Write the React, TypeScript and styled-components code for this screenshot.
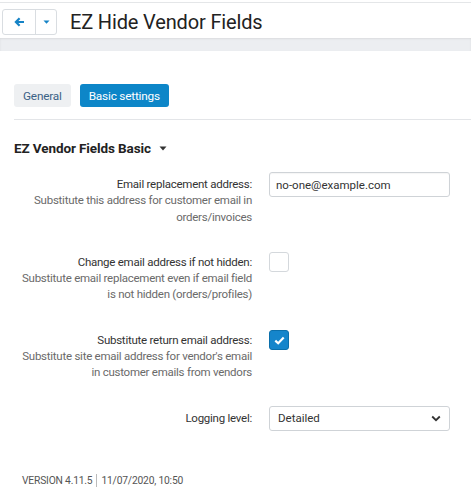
import React from 'react';
import styled, {createGlobalStyle} from 'styled-components';

const GlobalStyle = createGlobalStyle`
    html, body {
        margin: 0;
        padding: 0;
        background: #fff;
    }
    body {
        font-family: Roboto, "Liberation Sans", Arial, sans-serif;
        color: #333;
    }
`;

const Page = styled.div`
    width: 471px;
    min-height: 500px;
    border-top: 1px solid #e4e6e8;
    margin-top: 2px;
`;

const Header = styled.header`
    display: flex;
    align-items: center;
    gap: 13px;
    height: 35px;
    padding: 3px 0 0 2px;
    box-sizing: border-box;
`;

const BtnGroup = styled.div`
    display: flex;
    height: 26px;
    border: 1px solid #d9dde1;
    border-radius: 3px;
    box-sizing: border-box;
    background: #fff;
`;

const NavBtn = styled.button<{ $wide?: boolean }>`
    width: ${p => (p.$wide ? 32 : 21)}px;
    display: flex;
    align-items: center;
    justify-content: center;
    border: 0;
    padding: 0;
    background: transparent;
    & + & {
        border-left: 1px solid #d9dde1;
    }
`;

const Title = styled.h1`
    margin: 0;
    font-size: 20px;
    font-weight: 400;
    color: #222;
    letter-spacing: -0.15px;
`;

const Band = styled.div`
    height: 13px;
    background: #eceef1;
    box-shadow: inset 0 1px 2px rgba(0, 0, 0, 0.08);
`;

const Content = styled.main`
    padding: 33px 0 0 14px;
`;

const Tabs = styled.nav`
    display: flex;
    gap: 9px;
    padding-bottom: 12px;
    border-bottom: 1px solid #e3e5e8;
`;

const Tab = styled.button<{ $active?: boolean }>`
    height: 23px;
    padding: 0 9px;
    border: 0;
    border-radius: 3px;
    font-family: Roboto, "Liberation Sans", Arial, sans-serif;
    font-size: 11.8px;
    letter-spacing: -0.2px;
    background: ${p => (p.$active ? '#0d86c8' : '#eef0f2')};
    color: ${p => (p.$active ? '#fff' : '#3b6286')};
`;

const SectionTitle = styled.h2`
    display: flex;
    align-items: center;
    gap: 8px;
    margin: 18px 0 14px;
    font-size: 13.5px;
    font-weight: 700;
    color: #222;
    line-height: 20px;
    letter-spacing: -0.1px;
`;

const Row = styled.div`
    display: grid;
    grid-template-columns: 238px 181px;
    column-gap: 17px;
    margin-bottom: 25px;
`;

const Label = styled.div`
    text-align: right;
    font-size: 11.5px;
    line-height: 16.3px;
    padding-top: 4px;
    letter-spacing: -0.25px;
`;

const LabelTitle = styled.div`
    color: #333;
`;

const LabelHint = styled.div`
    color: #6a6a6a;
`;

const Control = styled.div`
    height: 25px;
    display: flex;
    align-items: center;
`;

const TextInput = styled.input`
    width: 100%;
    height: 25px;
    box-sizing: border-box;
    border: 1px solid #cfd3d7;
    border-radius: 3px;
    padding: 0 6px;
    font-family: Roboto, "Liberation Sans", Arial, sans-serif;
    font-size: 11.5px;
    color: #333;
    box-shadow: inset 0 1px 1px rgba(0, 0, 0, 0.04);
    outline: none;
`;

const Check = styled.span<{ $checked?: boolean }>`
    width: 20px;
    height: 20px;
    box-sizing: border-box;
    border-radius: 3px;
    border: 1px solid ${p => (p.$checked ? '#0b6fab' : '#d4d8dc')};
    background: ${p => (p.$checked ? '#1585cb' : '#fff')};
    display: flex;
    align-items: center;
    justify-content: center;
`;

const SelectBox = styled.div`
    width: 100%;
    height: 25px;
    box-sizing: border-box;
    border: 1px solid #cfd3d7;
    border-radius: 3px;
    padding: 0 8px;
    display: flex;
    align-items: center;
    justify-content: space-between;
    font-size: 11.5px;
    color: #333;
`;

const Footer = styled.footer`
    display: flex;
    align-items: center;
    gap: 4px;
    margin: 43px 0 0 8px;
    font-size: 10.3px;
    color: #555;
    letter-spacing: -0.2px;
`;

const Divider = styled.span`
    width: 1px;
    height: 13px;
    background: #bbb;
`;

const fields = [
    {
        title: 'Email replacement address:',
        hint: ['Substitute this address for customer email in', 'orders/invoices'],
        kind: 'input',
    },
    {
        title: 'Change email address if not hidden:',
        hint: ['Substitute email replacement even if email field', 'is not hidden (orders/profiles)'],
        kind: 'check',
    },
    {
        title: 'Substitute return email address:',
        hint: ["Substitute site email address for vendor's email", 'in customer emails from vendors'],
        kind: 'checked',
    },
    {
        title: 'Logging level:',
        hint: [],
        kind: 'select',
    },
];

const renderControl = (kind: string) => {
    if (kind === 'input') return <TextInput defaultValue="no-one@example.com"/>;
    if (kind === 'select') {
        return (
            <SelectBox>
                <span>Detailed</span>
                <svg width="10" height="7" viewBox="0 0 10 7">
                    <path d="M1.2 1.5 5 5.2 8.8 1.5" fill="none" stroke="#333" strokeWidth="1.8"/>
                </svg>
            </SelectBox>
        );
    }
    const checked = kind === 'checked';
    return (
        <Check $checked={checked}>
            {checked && (
                <svg width="11" height="9" viewBox="0 0 11 9">
                    <path d="M1.3 4.6 4.2 7.3 9.7 1.6" fill="none" stroke="#fff" strokeWidth="2.2"/>
                </svg>
            )}
        </Check>
    );
};

export default function App() {
    return (
        <Page>
            <GlobalStyle/>
            <Header>
                <BtnGroup>
                    <NavBtn $wide>
                        <svg width="11" height="10" viewBox="0 0 11 10">
                            <path d="M10 5H2.5M5.6 1.3 1.9 5l3.7 3.7" fill="none" stroke="#1583c6" strokeWidth="2.2"/>
                        </svg>
                    </NavBtn>
                    <NavBtn>
                        <svg width="7" height="4" viewBox="0 0 7 4">
                            <path d="M0.5 0.5h6L3.5 3.8z" fill="#1583c6"/>
                        </svg>
                    </NavBtn>
                </BtnGroup>
                <Title>EZ Hide Vendor Fields</Title>
            </Header>
            <Band/>
            <Content>
                <Tabs>
                    <Tab>General</Tab>
                    <Tab $active>Basic settings</Tab>
                </Tabs>
                <SectionTitle>
                    EZ Vendor Fields Basic
                    <svg width="8" height="5" viewBox="0 0 8 5">
                        <path d="M0.5 0.5h7L4 4.5z" fill="#333"/>
                    </svg>
                </SectionTitle>
                {fields.map(f => (
                    <Row key={f.title}>
                        <Label>
                            <LabelTitle>{f.title}</LabelTitle>
                            {f.hint.map(h => <LabelHint key={h}>{h}</LabelHint>)}
                        </Label>
                        <Control>{renderControl(f.kind)}</Control>
                    </Row>
                ))}
                <Footer>
                    <span>VERSION 4.11.5</span>
                    <Divider/>
                    <span>11/07/2020, 10:50</span>
                </Footer>
            </Content>
        </Page>
    );
}
